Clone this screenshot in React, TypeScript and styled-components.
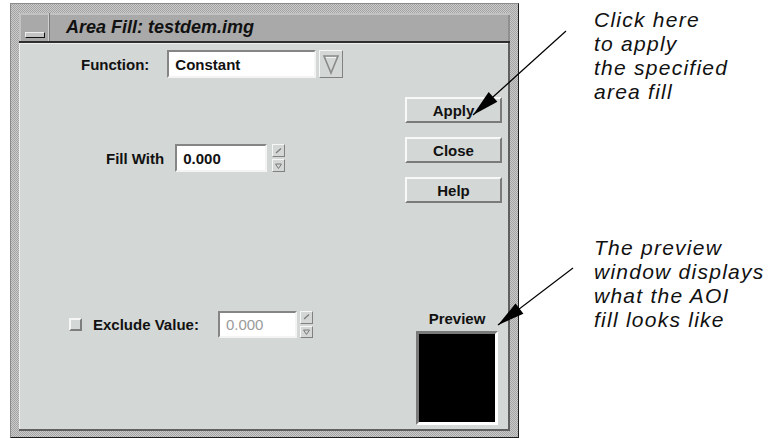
import React from "react";
import styled, { createGlobalStyle } from "styled-components";

const GlobalStyle = createGlobalStyle`
  html, body {
    margin: 0;
    padding: 0;
    background: #ffffff;
  }
  body {
    font-family: "Liberation Sans", Arial, sans-serif;
  }
`;

const stipple = `repeating-conic-gradient(#a4a4a4 0 25%, #cacaca 0 50%) 0 0 / 2px 2px`;

const Page = styled.div`
  position: relative;
  width: 773px;
  height: 438px;
  box-sizing: border-box;
  padding: 3px 0 0 10px;
  display: flex;
  align-items: flex-start;
  overflow: hidden;
`;

const Window = styled.div`
  width: 509px;
  height: 435px;
  box-sizing: border-box;
  background: ${stipple};
  border: 1px solid;
  border-color: #8a8a8a #1e1e1e #1e1e1e #8a8a8a;
  padding: 9px 8px 6px 8px;
  display: flex;
  flex-direction: column;
`;

const TitleBar = styled.div`
  height: 30px;
  box-sizing: border-box;
  display: flex;
  background: #a9a9a9;
  border-bottom: 2px solid #2e2e2e;
  box-shadow: inset 0 2px 0 #c2c2c2, inset 2px 0 0 #c2c2c2,
    inset -2px 0 0 #8f8f8f;
`;

const MenuButton = styled.div`
  width: 31px;
  flex: none;
  box-sizing: border-box;
  border-right: 1px solid #7a7a7a;
  box-shadow: inset -1px 0 0 #d0d0d0;
  padding: 19px 0 0 6px;
`;

const MenuBar = styled.div`
  width: 20px;
  height: 6px;
  box-sizing: border-box;
  background: #c4c4c4;
  border: 1px solid;
  border-color: #eeeeee #111111 #111111 #eeeeee;
`;

const TitleText = styled.div`
  font-size: 18px;
  font-weight: bold;
  font-style: italic;
  color: #111111;
  line-height: 28px;
  padding-left: 16px;
`;

const Panel = styled.div`
  flex: 1;
  display: flex;
  background: #d3d7d5;
  box-shadow: inset -2px -2px 0 #5f5f5f, inset 1px 1px 0 #ededed;
`;

const LeftColumn = styled.div`
  flex: 1;
  display: flex;
  flex-direction: column;
`;

const RightColumn = styled.div`
  width: 97px;
  margin-right: 8px;
  padding: 54px 0 6px;
  display: flex;
  flex-direction: column;
`;

const Row = styled.div<{ $top: number; $indent: number }>`
  display: flex;
  align-items: center;
  margin-top: ${(p) => p.$top}px;
  padding-left: ${(p) => p.$indent}px;
`;

const Label = styled.span<{ $gap: number }>`
  font-size: 15px;
  font-weight: bold;
  color: #111111;
  margin-right: ${(p) => p.$gap}px;
  white-space: nowrap;
`;

const Field = styled.div<{ $w: number; $h: number; $dim?: boolean }>`
  width: ${(p) => p.$w}px;
  height: ${(p) => p.$h}px;
  box-sizing: border-box;
  background: #ffffff;
  border: 2px solid;
  border-color: #858585 #f4f4f4 #f4f4f4 #858585;
  padding-left: 6px;
  display: flex;
  align-items: center;
  font-size: 15px;
  font-weight: ${(p) => (p.$dim ? "normal" : "bold")};
  color: ${(p) => (p.$dim ? "#9a9a9a" : "#111111")};
`;

const DropButton = styled.div`
  width: 24px;
  height: 28px;
  margin-left: 3px;
  box-sizing: border-box;
  background: #d3d7d5;
  border: 1px solid;
  border-color: #f6f6f6 #808080 #808080 #f6f6f6;
  display: flex;
  align-items: center;
  justify-content: center;
`;

const Spinner = styled.div<{ $h: number; $gap: number }>`
  width: 13px;
  height: ${(p) => p.$h}px;
  margin-left: ${(p) => p.$gap}px;
  display: flex;
  flex-direction: column;
  gap: 2px;
`;

const SpinPart = styled.div`
  flex: 1;
  box-sizing: border-box;
  background: #d3d7d5;
  border: 1px solid;
  border-color: #f6f6f6 #808080 #808080 #f6f6f6;
  display: flex;
  align-items: center;
  justify-content: center;
`;

const CheckBox = styled.div`
  width: 13px;
  height: 13px;
  box-sizing: border-box;
  background: #d3d7d5;
  border: 2px solid;
  border-color: #f6f6f6 #7d7d7d #7d7d7d #f6f6f6;
  margin-right: 11px;
`;

const ButtonStack = styled.div`
  display: flex;
  flex-direction: column;
  gap: 14px;
`;

const PushButton = styled.button`
  width: 97px;
  height: 26px;
  box-sizing: border-box;
  background: #d3d7d5;
  border: 2px solid;
  border-color: #f8f8f8 #7a7a7a #7a7a7a #f8f8f8;
  font-family: "Liberation Sans", Arial, sans-serif;
  font-size: 15px;
  font-weight: bold;
  color: #111111;
  padding: 0;
`;

const PreviewGroup = styled.div`
  margin-top: auto;
  margin-left: 11px;
  width: 82px;
  display: flex;
  flex-direction: column;
  align-items: center;
`;

const PreviewLabel = styled.span`
  font-size: 15px;
  font-weight: bold;
  color: #111111;
  line-height: 17px;
  margin-bottom: 4px;
`;

const PreviewBox = styled.div`
  width: 82px;
  height: 94px;
  box-sizing: border-box;
  background: #000000;
  border: 3px solid;
  border-color: #7a7a7a #ffffff #ffffff #7a7a7a;
`;

const Notes = styled.div`
  margin-left: 75px;
  display: flex;
  flex-direction: column;
`;

const Note = styled.div<{ $top: number }>`
  margin-top: ${(p) => p.$top}px;
  font-size: 21px;
  letter-spacing: 1.25px;
  font-style: italic;
  line-height: 24px;
  color: #111111;
  white-space: nowrap;
`;

const Overlay = styled.svg`
  position: absolute;
  left: 0;
  top: 0;
  pointer-events: none;
`;

const UpMark = () => (
  <svg width="7" height="6" viewBox="0 0 7 6">
    <path d="M1 5 L6 0.5" stroke="#7a7a7a" strokeWidth="1.2" fill="none" />
  </svg>
);

const DownMark = () => (
  <svg width="7" height="6" viewBox="0 0 7 6">
    <path d="M0.5 1 H6.5 L3.5 5.5 Z" fill="none" stroke="#7a7a7a" strokeWidth="1" />
  </svg>
);

const Spin = ({ h, gap }: { h: number; gap: number }) => (
  <Spinner $h={h} $gap={gap}>
    <SpinPart>
      <UpMark />
    </SpinPart>
    <SpinPart>
      <DownMark />
    </SpinPart>
  </Spinner>
);

function arrowHead(x1: number, y1: number, tx: number, ty: number, len: number, half: number) {
  const dx = tx - x1;
  const dy = ty - y1;
  const d = Math.hypot(dx, dy);
  const ux = dx / d;
  const uy = dy / d;
  const bx = tx - ux * len;
  const by = ty - uy * len;
  const nx = -uy;
  const ny = ux;
  return `${tx},${ty} ${bx + nx * half},${by + ny * half} ${bx - nx * half},${by - ny * half}`;
}

const arrows = [
  { x1: 566, y1: 31, tx: 473, ty: 115 },
  { x1: 573, y1: 268, tx: 498, ty: 325 },
];

const App = () => {
  return (
    <>
      <GlobalStyle />
      <Page>
        <Window>
          <TitleBar>
            <MenuButton>
              <MenuBar />
            </MenuButton>
            <TitleText>Area Fill: testdem.img</TitleText>
          </TitleBar>
          <Panel>
            <LeftColumn>
              <Row $top={7} $indent={62}>
                <Label $gap={18}>Function:</Label>
                <Field $w={149} $h={28}>Constant</Field>
                <DropButton>
                  <svg width="18" height="22" viewBox="0 0 18 22">
                    <path d="M2 3 H16 L9 20 Z" fill="none" stroke="#8a8a8a" strokeWidth="1.6" />
                    <path d="M4 4.5 H14" stroke="#f4f4f4" strokeWidth="1" />
                  </svg>
                </DropButton>
              </Row>
              <Row $top={66} $indent={87}>
                <Label $gap={11}>Fill With</Label>
                <Field $w={92} $h={28}>0.000</Field>
                <Spin h={28} gap={5} />
              </Row>
              <Row $top={139} $indent={50}>
                <CheckBox />
                <Label $gap={19}>Exclude Value:</Label>
                <Field $w={79} $h={27} $dim>
                  0.000
                </Field>
                <Spin h={27} gap={3} />
              </Row>
            </LeftColumn>
            <RightColumn>
              <ButtonStack>
                <PushButton>Apply</PushButton>
                <PushButton>Close</PushButton>
                <PushButton>Help</PushButton>
              </ButtonStack>
              <PreviewGroup>
                <PreviewLabel>Preview</PreviewLabel>
                <PreviewBox />
              </PreviewGroup>
            </RightColumn>
          </Panel>
        </Window>
        <Notes>
          <Note $top={5}>
            Click here
            <br />
            to apply
            <br />
            the specified
            <br />
            area fill
          </Note>
          <Note $top={132}>
            The preview
            <br />
            window displays
            <br />
            what the AOI
            <br />
            fill looks like
          </Note>
        </Notes>
        <Overlay width="773" height="438" viewBox="0 0 773 438">
          {arrows.map((a, i) => (
            <g key={i}>
              <line x1={a.x1} y1={a.y1} x2={a.tx} y2={a.ty} stroke="#000" strokeWidth="1.2" />
              <polygon points={arrowHead(a.x1, a.y1, a.tx, a.ty, 27, 6.5)} fill="#000" />
            </g>
          ))}
        </Overlay>
      </Page>
    </>
  );
};

export default App;
